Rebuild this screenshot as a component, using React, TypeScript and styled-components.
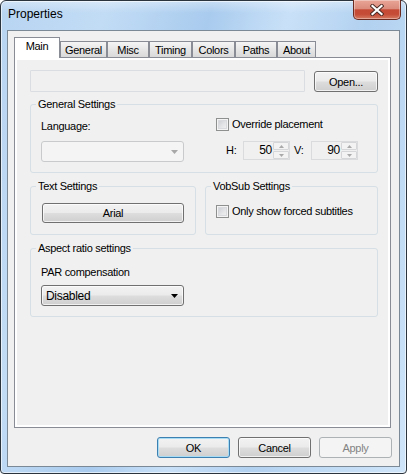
import styled, { createGlobalStyle, css } from "styled-components";

const tabs = [
  { label: "Main", w: 46 },
  { label: "General", w: 47 },
  { label: "Misc", w: 42 },
  { label: "Timing", w: 43 },
  { label: "Colors", w: 43 },
  { label: "Paths", w: 42 },
  { label: "About", w: 39 },
];

function DownArrow({ color }: { color: string }) {
  return (
    <svg width="7" height="4" viewBox="0 0 7 4">
      <polygon points="0,0 7,0 3.5,4" fill={color} />
    </svg>
  );
}

function Spin({ value }: { value: string }) {
  return (
    <SpinBox>
      <SpinValue>{value}</SpinValue>
      <SpinArrows>
        <SpinPart>
          <svg width="5" height="3" viewBox="0 0 5 3">
            <polygon points="0,3 5,3 2.5,0" fill="#a9a9a9" />
          </svg>
        </SpinPart>
        <SpinPart>
          <svg width="5" height="3" viewBox="0 0 5 3">
            <polygon points="0,0 5,0 2.5,3" fill="#a9a9a9" />
          </svg>
        </SpinPart>
      </SpinArrows>
    </SpinBox>
  );
}

function App() {
  return (
    <>
      <GlobalStyle />
      <Window>
        <TitleBar>
          <Title>Properties</Title>
          <CloseButton>
            <svg width="14" height="12" viewBox="0 0 14 12">
              <path d="M2.5 2 L11.5 10 M11.5 2 L2.5 10" stroke="#4a2a24" strokeWidth="4" strokeLinecap="square" />
              <path d="M2.5 2 L11.5 10 M11.5 2 L2.5 10" stroke="#ffffff" strokeWidth="2.2" strokeLinecap="square" />
            </svg>
          </CloseButton>
        </TitleBar>
        <Client>
          <TabRow>
            {tabs.map((t, i) => (
              <Tab key={t.label} $w={t.w} $active={i === 0}>
                {t.label}
              </Tab>
            ))}
          </TabRow>
          <Panel>
            <Page>
              <PathRow>
                <PathBox />
                <Button $w={64} $h={21}>Open...</Button>
              </PathRow>

              <Group $mt={6}>
                <Legend>General Settings</Legend>
                <GeneralBody>
                  <Column>
                    <FieldLabel>Language:</FieldLabel>
                    <Combo $disabled>
                      <DownArrow color="#a8a8a8" />
                    </Combo>
                  </Column>
                  <Column>
                    <CheckRow>
                      <CheckBox />
                      Override placement
                    </CheckRow>
                    <SpinRow>
                      <SpinLabel>H:</SpinLabel>
                      <Spin value="50" />
                      <SpinLabel $ml={4}>V:</SpinLabel>
                      <Spin value="90" />
                    </SpinRow>
                  </Column>
                </GeneralBody>
              </Group>

              <GroupRow>
                <Group $w={166}>
                  <Legend>Text Settings</Legend>
                  <TextBody>
                    <Button $w={142} $h={20}>Arial</Button>
                  </TextBody>
                </Group>
                <Group $grow>
                  <Legend>VobSub Settings</Legend>
                  <VobBody>
                    <CheckRow>
                      <CheckBox />
                      Only show forced subtitles
                    </CheckRow>
                  </VobBody>
                </Group>
              </GroupRow>

              <Group $mt={7}>
                <Legend>Aspect ratio settings</Legend>
                <AspectBody>
                  <FieldLabel>PAR compensation</FieldLabel>
                  <Combo $mt={6}>
                    <ComboText>Disabled</ComboText>
                    <DownArrow color="#000000" />
                  </Combo>
                </AspectBody>
              </Group>
            </Page>
          </Panel>
          <Footer>
            <Button $w={73} $h={21} $variant="default">OK</Button>
            <Button $w={73} $h={21}>Cancel</Button>
            <Button $w={73} $h={21} $variant="disabled">Apply</Button>
          </Footer>
        </Client>
      </Window>
    </>
  );
}

const GlobalStyle = createGlobalStyle`
  html, body {
    margin: 0;
    padding: 0;
    background: #ffffff;
  }
  body {
    font-family: "Liberation Sans", Arial, sans-serif;
    font-size: 11px;
    letter-spacing: -0.3px;
    color: #000000;
  }
`;

const Window = styled.div`
  width: 407px;
  height: 474px;
  box-sizing: border-box;
  border: 1px solid #2b333d;
  border-radius: 6px 6px 4px 4px;
  padding: 0 6px 6px 6px;
  display: flex;
  flex-direction: column;
  background:
    linear-gradient(180deg, rgba(255, 255, 255, 0.35) 0, rgba(255, 255, 255, 0) 12px),
    linear-gradient(105deg, #b7d4f1 0%, #c2dcf5 20%, #a9cbee 40%, #c9e1f8 55%, #b2d1f0 70%, #cfe5f9 100%);
  box-shadow: inset 0 0 0 1px rgba(255, 255, 255, 0.6);
`;

const TitleBar = styled.div`
  height: 29px;
  display: flex;
  justify-content: space-between;
  align-items: flex-start;
`;

const Title = styled.div`
  padding: 6px 0 0 1px;
  font-size: 12px;
  line-height: 15px;
  letter-spacing: 0;
  color: #000000;
`;

const CloseButton = styled.div`
  width: 48px;
  height: 20px;
  margin: -1px -1px 0 0;
  box-sizing: border-box;
  border: 1px solid #6b2a20;
  border-top: none;
  border-radius: 0 0 5px 5px;
  display: flex;
  align-items: center;
  justify-content: center;
  background: linear-gradient(180deg, #e8a597 0%, #db8c7c 45%, #c64a36 52%, #c54c37 75%, #d67b62 100%);
  box-shadow: inset 0 0 0 1px rgba(255, 255, 255, 0.35);
`;

const Client = styled.div`
  width: 393px;
  height: 437px;
  box-sizing: border-box;
  border: 1px solid #7b8896;
  background: #f0f0f0;
  display: flex;
  flex-direction: column;
`;

const TabRow = styled.div`
  display: flex;
  align-items: flex-end;
  height: 20px;
  margin: 6px 0 0 6px;
`;

const Tab = styled.div<{ $w: number; $active?: boolean }>`
  width: ${(p) => p.$w}px;
  box-sizing: border-box;
  border: 1px solid #898c95;
  border-bottom: none;
  text-align: center;
  ${(p) =>
    p.$active
      ? css`
          height: 21px;
          margin-bottom: -1px;
          position: relative;
          z-index: 1;
          background: #ffffff;
          line-height: 15px;
          padding-top: 1px;
        `
      : css`
          height: 16px;
          background: linear-gradient(180deg, #f5f5f5 0%, #e6e6e6 50%, #d9d9d9 100%);
          line-height: 15px;
          padding-top: 1px;
        `}
`;

const Panel = styled.div`
  margin-left: 6px;
  width: 377px;
  height: 371px;
  box-sizing: border-box;
  border: 1px solid #898c95;
  background: #ffffff;
  padding: 2px;
  display: flex;
`;

const Page = styled.div`
  flex: 1;
  background: #f0f0f0;
  padding: 10px 10px 0 13px;
  display: flex;
  flex-direction: column;
`;

const PathRow = styled.div`
  display: flex;
  justify-content: space-between;
  align-items: flex-start;
`;

const PathBox = styled.div`
  width: 275px;
  height: 22px;
  box-sizing: border-box;
  border: 1px solid #dadde1;
  border-radius: 1px;
  background: #f0f0f0;
`;

const Button = styled.div<{ $w: number; $h: number; $variant?: "default" | "disabled" }>`
  width: ${(p) => p.$w}px;
  height: ${(p) => p.$h}px;
  margin-top: ${(p) => (p.$h === 21 ? 1 : 0)}px;
  box-sizing: border-box;
  border: 1px solid #707070;
  border-radius: 3px;
  display: flex;
  align-items: center;
  justify-content: center;
  background: linear-gradient(180deg, #f2f2f2 0%, #ebebeb 48%, #dddddd 52%, #cfcfcf 100%);
  box-shadow: inset 0 0 0 1px rgba(255, 255, 255, 0.7);
  ${(p) =>
    p.$variant === "default" &&
    css`
      border-color: #3c7fb1;
      box-shadow: inset 0 0 0 1px #a8dcf5;
    `}
  ${(p) =>
    p.$variant === "disabled" &&
    css`
      border-color: #adb2b5;
      background: #f4f4f4;
      box-shadow: none;
      color: #838383;
    `}
`;

const Group = styled.fieldset<{ $mt?: number; $w?: number; $grow?: boolean }>`
  margin: ${(p) => p.$mt ?? 0}px 0 0 0;
  padding: 0;
  min-width: 0;
  border: 1px solid #d5dfe5;
  border-radius: 3px;
  ${(p) => p.$w && `width: ${p.$w}px; box-sizing: border-box; flex: none;`}
  ${(p) => p.$grow && `flex: 1;`}
`;

const Legend = styled.legend`
  padding: 0 2px;
  margin-left: 5px;
  line-height: 13px;
`;

const GroupRow = styled.div`
  display: flex;
  gap: 9px;
  margin-top: 7px;
`;

const GeneralBody = styled.div`
  display: grid;
  grid-template-columns: 175px 1fr;
  padding: 7px 10px 10px 10px;
`;

const TextBody = styled.div`
  padding: 10px 11px 11px 11px;
`;

const VobBody = styled.div`
  padding: 12px 10px 16px 10px;
`;

const AspectBody = styled.div`
  padding: 9px 10px 10px 10px;
  display: flex;
  flex-direction: column;
`;

const Column = styled.div`
  display: flex;
  flex-direction: column;
`;

const FieldLabel = styled.div`
  line-height: 13px;
  margin-top: 2px;
`;

const Combo = styled.div<{ $disabled?: boolean; $mt?: number }>`
  width: 143px;
  height: 21px;
  margin-top: ${(p) => p.$mt ?? 8}px;
  box-sizing: border-box;
  border-radius: 3px;
  display: flex;
  align-items: center;
  padding: 0 5px 0 4px;
  justify-content: flex-end;
  ${(p) =>
    p.$disabled
      ? css`
          border: 1px solid #c8cacc;
          background: #f4f4f4;
        `
      : css`
          border: 1px solid #707070;
          background: linear-gradient(180deg, #f2f2f2 0%, #ebebeb 48%, #dddddd 52%, #cfcfcf 100%);
          box-shadow: inset 0 0 0 1px rgba(255, 255, 255, 0.7);
        `}
`;

const ComboText = styled.span`
  margin-right: auto;
  font-size: 12px;
  letter-spacing: -0.3px;
`;

const CheckRow = styled.div`
  display: flex;
  align-items: center;
  gap: 3px;
  line-height: 13px;
  height: 13px;
`;

const CheckBox = styled.span`
  width: 13px;
  height: 13px;
  box-sizing: border-box;
  border: 1px solid #8e8f8f;
  background: linear-gradient(135deg, #c4c8ce 0%, #e6e7e9 60%, #f4f4f4 100%);
  box-shadow: inset 0 0 0 1px #f4f4f4, inset 0 0 0 2px #d8dadd;
  flex: none;
`;

const SpinRow = styled.div`
  display: flex;
  align-items: center;
  margin-top: 10px;
  padding-left: 10px;
`;

const SpinLabel = styled.span<{ $ml?: number }>`
  width: 17px;
  margin-left: ${(p) => p.$ml ?? 0}px;
  line-height: 19px;
  flex: none;
`;

const SpinBox = styled.div`
  width: 47px;
  height: 19px;
  box-sizing: border-box;
  border: 1px solid #d9dbdd;
  background: #f0f0f0;
  display: flex;
`;

const SpinValue = styled.span`
  flex: 1;
  text-align: right;
  line-height: 17px;
  padding-right: 1px;
  font-size: 12px;
`;

const SpinArrows = styled.div`
  width: 16px;
  display: flex;
  flex-direction: column;
  gap: 1px;
`;

const SpinPart = styled.div`
  flex: 1;
  box-sizing: border-box;
  border: 1px solid #d4d6d8;
  border-radius: 1px;
  background: #f3f3f3;
  display: flex;
  align-items: center;
  justify-content: center;
`;

const Footer = styled.div`
  display: flex;
  justify-content: flex-end;
  gap: 8px;
  margin-top: 8px;
  padding-right: 7px;
`;

export default App;
